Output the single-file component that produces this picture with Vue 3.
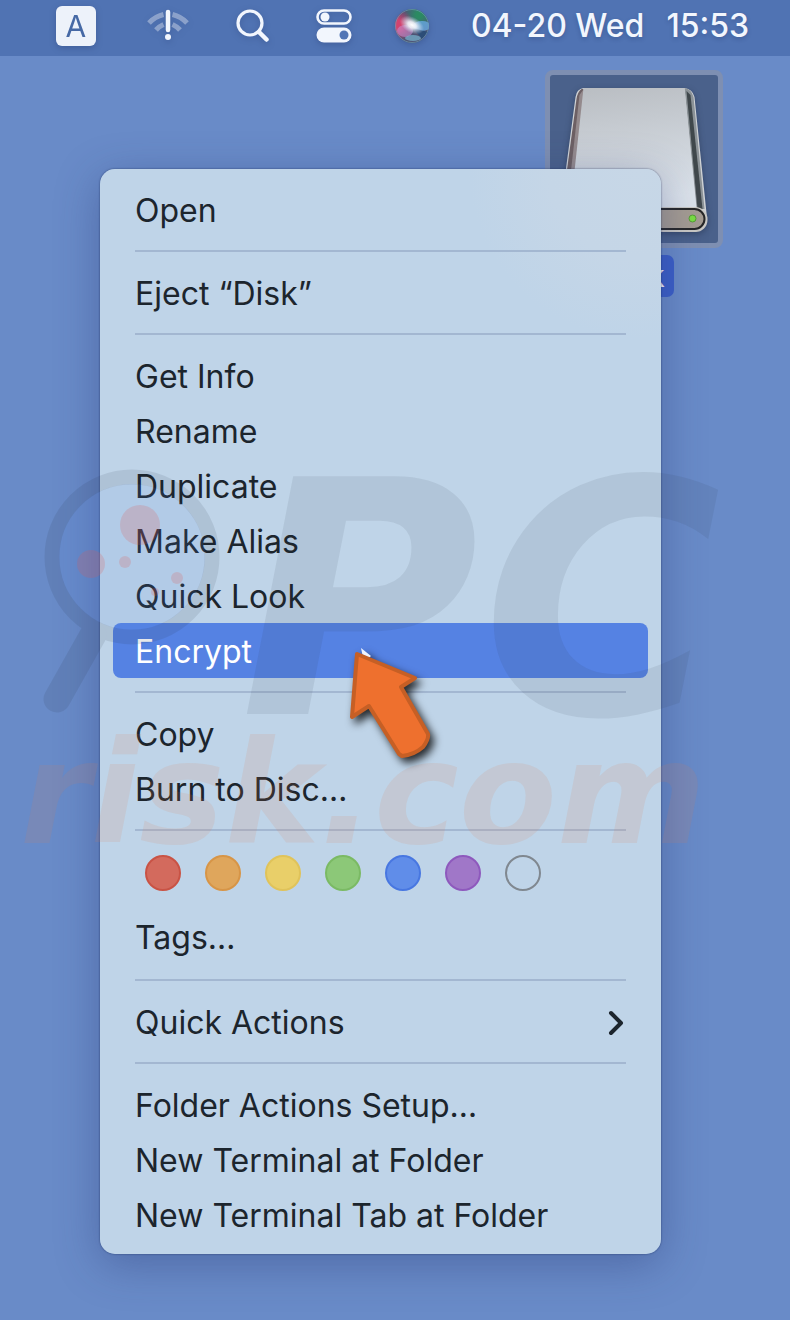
<template>
  <div class="desktop">
    <header class="menubar">
      <button class="bar-btn input-source" aria-label="Input source">A</button>
      <button class="bar-btn wifi" aria-label="Wi-Fi">
        <svg width="44" height="36" viewBox="0 0 44 36">
          <g fill="none" stroke="#fff" stroke-opacity="0.35" stroke-width="5">
            <path d="M3 15Q9 8.500 17.500 6.500M26.500 6.500Q35 8.500 41 15" />
            <path d="M10 22Q13 18.500 17.500 16.500M26.500 16.500Q31 18.500 34 22" />
          </g>
          <path d="M22 4V22" stroke="#f2f6fd" stroke-width="4.500" stroke-linecap="round" />
          <circle cx="22" cy="29" r="3" fill="#f2f6fd" />
        </svg>
      </button>
      <button class="bar-btn search" aria-label="Search">
        <svg width="34" height="34" viewBox="0 0 34 34" fill="none" stroke="#f2f6fd" stroke-linecap="round">
          <circle cx="14" cy="14" r="12" stroke-width="3.200" />
          <path d="M23 23L30.500 30.500" stroke-width="4.500" />
        </svg>
      </button>
      <button class="bar-btn control" aria-label="Control Center">
        <svg width="36" height="34" viewBox="0 0 36 34">
          <rect x="1.500" y="1.500" width="33" height="13" rx="6.500" fill="none" stroke="#f2f6fd" stroke-width="2.600" />
          <circle cx="9" cy="8" r="4.500" fill="#f2f6fd" />
          <rect x="0.500" y="18.500" width="35" height="15" rx="7.500" fill="#f2f6fd" />
          <circle cx="28" cy="26" r="4.500" fill="#5275b5" />
        </svg>
      </button>
      <button class="bar-btn siri" aria-label="Siri">
        <svg width="36" height="36" viewBox="0 0 36 36">
          <defs>
            <radialGradient id="siri-core">
              <stop offset="0" stop-color="#fff" />
              <stop offset="0.350" stop-color="#f3f4fb" stop-opacity="0.900" />
              <stop offset="1" stop-color="#c8dcf0" stop-opacity="0" />
            </radialGradient>
            <radialGradient id="siri-red">
              <stop offset="0.300" stop-color="#d2436f" />
              <stop offset="1" stop-color="#c2436f" stop-opacity="0" />
            </radialGradient>
            <radialGradient id="siri-green">
              <stop offset="0.200" stop-color="#2b8a62" />
              <stop offset="1" stop-color="#2b8a72" stop-opacity="0" />
            </radialGradient>
            <clipPath id="siri-clip"><circle cx="18" cy="18" r="17" /></clipPath>
          </defs>
          <g clip-path="url(#siri-clip)">
            <rect width="36" height="36" fill="#4f5474" />
            <circle cx="25" cy="7" r="15" fill="url(#siri-green)" />
            <circle cx="4" cy="17" r="16" fill="url(#siri-red)" />
            <ellipse cx="28" cy="18" rx="9" ry="5" fill="#67a9e0" opacity="0.800" />
            <ellipse cx="11" cy="23" rx="8" ry="6" fill="#c48bcb" opacity="0.600" />
            <ellipse cx="19" cy="30" rx="8" ry="3" fill="#7fc4e0" opacity="0.600" />
            <path d="M19 20L34 24L28 31Z" fill="#234b78" opacity="0.800" />
            <ellipse cx="18" cy="17" rx="13" ry="8" fill="url(#siri-core)" transform="rotate(28 18 17)" />
          </g>
          <circle cx="18" cy="18" r="16.500" fill="none" stroke="#6ea1b5" stroke-opacity="0.600" />
        </svg>
      </button>
      <time class="clock"><span>04-20 Wed</span><span>15:53</span></time>
    </header>

    <main class="canvas">
      <div class="disk">
        <div class="disk-frame">
          <svg viewBox="0 0 167 168">
            <defs>
              <linearGradient id="disk-top" x1="0" x2="0.150" y1="0" y2="1">
                <stop offset="0" stop-color="#b9bdc2" />
                <stop offset="1" stop-color="#dbe2ea" />
              </linearGradient>
            </defs>
            <path d="M33 13Q26 14 25 22L9 142Q10 157 25 157H143Q157 155 156 138L144 22Q142 14 134 13Z" fill="#cfd2d5" />
            <path d="M31 14Q27 17 26 24L11 136H22L33 14Z" fill="#6d6064" />
            <path d="M29 20L16 136H24L34 13Z" fill="#948a8d" />
            <path d="M134 13Q141 14 143 22L154 134H146Z" fill="#8b9297" />
            <path d="M136 16L140 20L152 134H147Z" fill="#40484c" />
            <path d="M33 13H134L146 133H20Z" fill="url(#disk-top)" />
            <rect x="9" y="132" width="148" height="25" rx="12" fill="#c9c8c4" />
            <rect x="11" y="134" width="143" height="20" rx="10" fill="#a59c92" stroke="#272727" stroke-width="2" />
            <circle cx="142" cy="143.500" r="3.500" fill="#79dd42" stroke="#559d36" />
          </svg>
        </div>
        <span class="disk-label">Disk</span>
      </div>

      <nav class="menu" aria-label="Disk actions">
        <template v-for="(group, g) in groups" :key="g">
          <hr v-if="g" class="divider" />
          <div v-if="group.tags" class="tags">
            <button
              v-for="tag in tags"
              :key="tag"
              :class="['tag', tag]"
              :aria-label="tag"
            ></button>
          </div>
          <button
            v-for="item in group.items"
            :key="item"
            :class="['item', { active: item === active }]"
            @mouseenter="active = item"
          >
            <span>{{ item }}</span>
            <svg v-if="item === 'Quick Actions'" class="chevron" width="16" height="26" viewBox="0 0 16 26">
              <path d="M3 3L13 13L3 23" fill="none" stroke="currentColor" stroke-width="4" stroke-linecap="round" stroke-linejoin="round" />
            </svg>
          </button>
        </template>
      </nav>

      <svg class="watermark" width="790" height="420" viewBox="0 450 790 420" aria-hidden="true">
        <circle cx="132" cy="557" r="73" fill="#5c8fe8" opacity="0.120" />
        <g opacity="0.100">
          <circle cx="132" cy="557" r="80" fill="none" stroke="#202a38" stroke-width="15" />
          <path d="M93 635L57 699" fill="none" stroke="#202a38" stroke-width="27" stroke-linecap="round" />
        </g>
        <g fill="#e2574f" opacity="0.200">
          <circle cx="140" cy="525" r="20" />
          <circle cx="91" cy="564" r="14" />
          <circle cx="125" cy="562" r="6" />
          <circle cx="177" cy="578" r="6" />
          <circle cx="155" cy="592" r="4" />
        </g>
        <text class="wm-big" x="240" y="714">P</text>
        <text class="wm-big" x="482" y="714">C</text>
        <text class="wm-small" x="20" y="843">risk.com</text>
      </svg>

      <svg class="pointer" width="110" height="130" viewBox="0 0 110 130" aria-hidden="true">
        <path d="M21 5L31 13L24 19Z" fill="#eef3ff" />
        <path
          d="M17 11L75 35L61 44L88 91Q89 96 83 104Q74 112 62 113L59 111L29 63L12 74Z"
          fill="#ee702e" stroke="#c65f25" stroke-width="4" stroke-linejoin="round"
        />
      </svg>
    </main>
  </div>
</template>

<script setup>
import { ref } from 'vue';

const active = ref('Encrypt');

const tags = ['red', 'orange', 'yellow', 'green', 'blue', 'purple', 'none'];

const groups = [
  { items: ['Open'] },
  { items: ['Eject “Disk”'] },
  { items: ['Get Info', 'Rename', 'Duplicate', 'Make Alias', 'Quick Look', 'Encrypt'] },
  { items: ['Copy', 'Burn to Disc…'] },
  { tags: true, items: ['Tags…'] },
  { items: ['Quick Actions'] },
  { items: ['Folder Actions Setup…', 'New Terminal at Folder', 'New Terminal Tab at Folder'] },
];
</script>

<style>
body { margin: 0; background: #698bc8; }
</style>

<style scoped>
.desktop {
  position: relative;
  min-height: 100vh;
  overflow: hidden;
  background: #698bc8;
  font-family: Inter, "Liberation Sans", sans-serif;
}
button {
  border: 0; padding: 0; background: none;
  font: inherit; color: inherit;
}

.menubar {
  display: flex; align-items: center; justify-content: flex-end;
  height: 56px; box-sizing: border-box;
  padding: 0 41px 4px 0;
  background: #5073b3;
  color: #f2f6fd;
}
.bar-btn { display: flex; align-items: center; justify-content: center; filter: drop-shadow(0 2px 3px rgba(30, 50, 100, 0.3)); }
.input-source {
  width: 40px; height: 40px; border-radius: 6px;
  background: #edf2fa; color: #4669a5;
  font-size: 30px;
}
.wifi { margin-left: 50px; }
.search { margin-left: 46px; }
.control { margin-left: 46px; }
.siri { margin-left: 42px; }
.clock {
  display: flex; gap: 22px; margin-left: 41px;
  font-size: 32px; font-weight: 500; line-height: 40px;
  white-space: nowrap;
  text-shadow: 0 2px 4px rgba(30, 50, 100, 0.3);
}

.disk {
  position: absolute; top: 70px; right: 67px;
  display: flex; flex-direction: column; align-items: center; gap: 7px;
}
.disk-frame {
  width: 168px; height: 168px;
  border: 5px solid #7e8fb2; border-radius: 8px;
  background: #4a618b;
}
.disk-frame svg { display: block; width: 100%; height: 100%; filter: drop-shadow(0 2px 3px rgba(20, 30, 50, 0.4)); }
.disk-label {
  padding: 0 9px; border-radius: 7px;
  background: #3b5fc8; color: #fff;
  font-size: 30px; line-height: 42px;
}

.menu {
  position: absolute; top: 169px; left: 100px; right: 129px;
  display: flex; flex-direction: column;
  padding: 13px 13px 12px;
  border-radius: 15px;
  background: radial-gradient(circle at 96% 0, #c7d7e7 0, #c5d6e7 90px, #bfd4e8 170px);
  box-shadow: 0 0 2px rgba(20, 35, 80, 0.7), 0 10px 44px rgba(40, 55, 115, 0.4);
  color: #1c252d;
}
.item {
  display: flex; align-items: center; justify-content: space-between;
  height: 55px; padding: 2px 24px 0 22px; box-sizing: border-box;
  border-radius: 8px;
  font-size: 32px; line-height: 40px;
  text-align: left; white-space: nowrap;
}
.item.active { background: #5582e3; color: #fff; }
.divider {
  width: auto; height: 2px; margin: 13px 22px; border: 0;
  background: #a3b7d1;
}
.tags { display: flex; gap: 24px; padding: 11px 32px 18px; }
.tags + .item { height: 57px; padding-top: 0; }
.tag {
  width: 36px; height: 36px; box-sizing: border-box;
  border: 2px solid #808890; border-radius: 50%;
}
.red { background: #d36a5d; border-color: #c95345; }
.orange { background: #dfa65c; border-color: #d79547; }
.yellow { background: #e9cf69; border-color: #e0c35a; }
.green { background: #8cc878; border-color: #7bba64; }
.blue { background: #608de9; border-color: #4877e1; }
.purple { background: #a077c8; border-color: #8e59bd; }

.watermark { position: absolute; top: 450px; left: 0; pointer-events: none; }
.wm-big, .wm-small { font-family: "DejaVu Sans", sans-serif; font-weight: 700; font-style: italic; }
.wm-big { font-size: 326px; fill: #303a40; fill-opacity: 0.09; }
.wm-small { font-size: 143px; fill: #e07a50; fill-opacity: 0.13; }

.pointer {
  position: absolute; top: 643px; left: 340px;
  pointer-events: none;
  filter: drop-shadow(4px 5px 4px rgba(0, 0, 0, 0.8));
}
</style>
